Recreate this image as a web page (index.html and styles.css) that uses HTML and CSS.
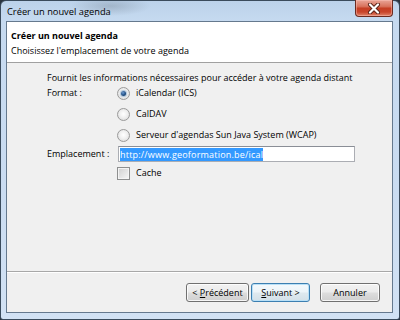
FILE: index.html
```html
<!DOCTYPE html>
<html lang="fr">
<head>
<meta charset="utf-8">
<title>Créer un nouvel agenda</title>
<link rel="stylesheet" href="styles.css">
</head>
<body>
<div class="window">
  <div class="titlebar">
    <span class="title">Créer un nouvel agenda</span>
    <div class="close">
      <svg width="14" height="11" viewBox="0 0 14 11">
        <path d="M3 1.5 L11 9.5 M11 1.5 L3 9.5" stroke="#5a2318" stroke-width="4" stroke-linecap="round"/>
        <path d="M3 1.5 L11 9.5 M11 1.5 L3 9.5" stroke="#ffffff" stroke-width="2.2" stroke-linecap="round"/>
      </svg>
    </div>
  </div>
  <div class="client">
    <div class="header">
      <div class="h-title">Créer un nouvel agenda</div>
      <div class="h-sub">Choisissez l'emplacement de votre agenda</div>
    </div>
    <div class="content">
      <div class="desc">Fournit les informations nécessaires pour accéder à votre agenda distant</div>
      <div class="form">
        <div class="label">Format :</div>
        <div class="options">
          <div class="opt"><span class="radio checked"></span><span>iCalendar (ICS)</span></div>
          <div class="opt"><span class="radio"></span><span>CalDAV</span></div>
          <div class="opt"><span class="radio"></span><span>Serveur d'agendas Sun Java System (WCAP)</span></div>
        </div>
        <div class="label">Emplacement :</div>
        <div class="input"><span class="sel">http://www.geoformation.be/ical</span></div>
        <div></div>
        <div class="opt"><span class="check"></span><span>Cache</span></div>
      </div>
    </div>
    <div class="footer">
      <div class="btn b-prev"><span>&lt; <u>P</u>récédent</span></div>
      <div class="btn b-next default"><span><u>S</u>uivant &gt;</span></div>
      <div class="btn b-cancel"><span>Annuler</span></div>
    </div>
  </div>
</div>
</body>
</html>
```

FILE: styles.css
```css
html, body {
  margin: 0;
  padding: 0;
  background: #2b3540;
}
body {
  font-family: "Open Sans", "Noto Sans", sans-serif;
  font-size: 9px;
  color: #000;
}
.window {
  width: 400px;
  height: 320px;
  box-sizing: border-box;
  border: 1px solid #3a4b5c;
  border-radius: 6px 6px 3px 3px;
  background:
    radial-gradient(ellipse 40px 10px at 110px 5px, rgba(110, 125, 140, 0.35), transparent),
    linear-gradient(#bcd2ea 0px, #c6daf0 20px, #cadcf1 60%, #d2e2f4 100%);
  padding: 0 6px 6px 5px;
  display: flex;
  flex-direction: column;
}
.titlebar {
  height: 20px;
  display: flex;
  justify-content: space-between;
  align-items: flex-start;
}
.title {
  padding: 4px 0 0 1px;
  line-height: 14px;
  font-size: 9.3px;
  color: #000;
}
.close {
  width: 38px;
  height: 17px;
  margin-top: -1px;
  box-sizing: border-box;
  border: 1px solid #6b2b20;
  border-top: none;
  border-radius: 0 0 4px 4px;
  background: linear-gradient(#e9a597 0%, #d8735d 40%, #c53f24 52%, #c9452b 75%, #e0856b 100%);
  box-shadow: inset 0 0 0 1px rgba(255, 200, 190, 0.45);
  display: flex;
  justify-content: center;
  align-items: center;
}
.client {
  flex: 1;
  border: 1px solid #65798e;
  background: #f0f0f0;
  display: flex;
  flex-direction: column;
}
.header {
  height: 41px;
  box-sizing: border-box;
  background: #fff;
  border-bottom: 1px solid #a0a0a0;
  padding: 6px 0 0 4px;
  line-height: 15px;
}
.h-title {
  font-weight: bold;
}
.content {
  flex: 1;
  padding: 7px 0 0 40px;
}
.desc {
  line-height: 15px;
}
.form {
  display: grid;
  grid-template-columns: 70px 238px;
  row-gap: 3px;
  line-height: 16px;
}
.options {
  display: flex;
  flex-direction: column;
  gap: 5px;
}
.opt {
  height: 16px;
  display: flex;
  align-items: center;
  gap: 6px;
}
.radio {
  width: 13px;
  height: 13px;
  box-sizing: border-box;
  border-radius: 50%;
  border: 1px solid #9a9a9a;
  background: radial-gradient(circle at 50% 45%, #ffffff 0%, #f0f0f0 45%, #d4d4d4 100%);
  display: flex;
  justify-content: center;
  align-items: center;
  flex: none;
}
.radio.checked::after {
  content: "";
  width: 5px;
  height: 5px;
  border-radius: 50%;
  background: radial-gradient(circle at 40% 35%, #6d9ad0 0%, #1f4f86 55%, #153659 100%);
  box-shadow: 0 0 1px 1px rgba(120, 160, 200, 0.6);
}
.check {
  width: 13px;
  height: 13px;
  box-sizing: border-box;
  border: 1px solid #8e8f8f;
  background: linear-gradient(135deg, #cfcfcf, #f7f7f7);
  box-shadow: inset 0 0 0 1px #f4f4f4;
  flex: none;
}
.input {
  height: 16px;
  margin-left: 1px;
  box-sizing: border-box;
  border: 1px solid #abadb3;
  border-top-color: #8a8e96;
  background: #fff;
  padding-left: 1px;
  line-height: 13px;
  display: flex;
  align-items: center;
}
.sel {
  background: #3399ff;
  color: #fff;
  line-height: 13px;
  letter-spacing: 0.2px;
}
.footer {
  height: 41px;
  box-sizing: border-box;
  border-top: 1px solid #a8a8a8;
  box-shadow: inset 0 1px 0 #ffffff;
  padding: 11px 12px 0 0;
  display: flex;
  justify-content: flex-end;
  align-items: flex-start;
}
.btn {
  height: 19px;
  box-sizing: border-box;
  border: 1px solid #707070;
  border-radius: 3px;
  background: linear-gradient(#f2f2f2 0%, #ebebeb 48%, #dddddd 52%, #cfcfcf 100%);
  box-shadow: inset 0 0 0 1px rgba(255, 255, 255, 0.8);
  display: flex;
  justify-content: center;
  align-items: center;
  line-height: 15px;
}
.btn u {
  text-decoration-thickness: 1px;
  text-underline-offset: 1px;
}
.b-prev {
  width: 63px;
}
.b-next {
  width: 59px;
  margin-left: 2px;
}
.b-cancel {
  width: 60px;
  margin-left: 10px;
}
.btn.default {
  border-color: #3c7fb1;
  background: linear-gradient(#f4f9fc 0%, #ecf4f9 48%, #dfe9ef 52%, #d3e0e8 100%);
  box-shadow: inset 0 0 0 1px #b9e0f7;
}
```
